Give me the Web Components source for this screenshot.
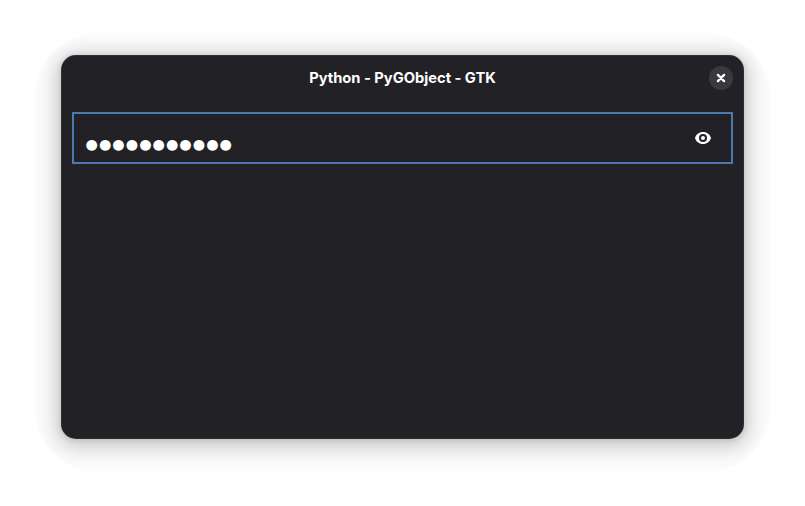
<!DOCTYPE html>
<html lang="en"><head><meta charset="utf-8"><title>Python - PyGObject - GTK</title>
<style>html,body{margin:0;height:100%;background:#fff;overflow:hidden}body{display:grid;padding:55px 61px 67px;box-sizing:border-box;font-family:Inter,"Noto Sans",sans-serif;color:#fff}</style></head>
<body>
<app-window><header-bar slot="header">Python - PyGObject - GTK</header-bar><password-entry>●●●●●●●●●●●</password-entry></app-window>
<script>
const define=(name,html)=>customElements.define(name,class extends HTMLElement{
 constructor(){super();this.attachShadow({mode:'open'}).innerHTML=html;}
});
define('close-button',`<style>:host{display:grid;place-items:center;width:24px;height:24px;border-radius:50%;background:#3a3a3e}svg{display:block}</style>
<svg width="16" height="16" viewBox="0 0 16 16" fill="none" stroke="#fff" stroke-width="2.3" stroke-linecap="round"><path d="M4.9 4.9l6.2 6.2M11.1 4.9l-6.2 6.2"/></svg>`);
define('header-bar',`<style>:host{display:grid;grid-template-columns:24px 1fr 24px;align-items:center;height:46px;padding:0 11px;box-sizing:border-box}.title{text-align:center;font-size:14.7px;font-weight:700;line-height:20px;white-space:nowrap;font-feature-settings:"calt" 0}</style>
<span></span><div class="title"><slot></slot></div><close-button></close-button>`);
define('eye-icon',`<style>:host{display:block;width:16px;height:16px}svg{display:block}</style>
<svg width="16" height="16" viewBox="0 0 16 16"><path fill="#fff" fill-rule="evenodd" d="M8 2C4 2 1 4.400 0 8c1 3.600 4 6 8 6s7-2.400 8-6c-1-3.600-4-6-8-6zM8 4a4 4 0 1 1 0 8a4 4 0 0 1 0-8zM8 6a2 2 0 1 0 0 4a2 2 0 0 0 0-4z"/></svg>`);
define('password-entry',`<style>:host{display:flex;align-items:center;justify-content:space-between;height:52px;margin:11px 11px 0;padding:0 20px 0 11.5px;border:2px solid #4e78b0;box-sizing:border-box}.dots{font:14.2px/20px "DejaVu Sans",sans-serif;letter-spacing:1.03px;padding-top:12px;white-space:nowrap}</style>
<div class="dots"><slot></slot></div><eye-icon></eye-icon>`);
define('app-window',`<style>:host{display:flex;flex-direction:column;box-sizing:border-box;background:#222226;border-radius:15px;clip-path:inset(-22px -27px -33px round 65px);box-shadow:inset 0 0 0 1px rgba(255,255,255,.06),0 1px 5px 1px rgba(0,0,0,.09),0 3px 16px 4px rgba(0,0,0,.12),0 5px 28px 12px rgba(0,0,0,.09)}</style>
<slot name="header"></slot><slot></slot>`);
</script></body></html>
